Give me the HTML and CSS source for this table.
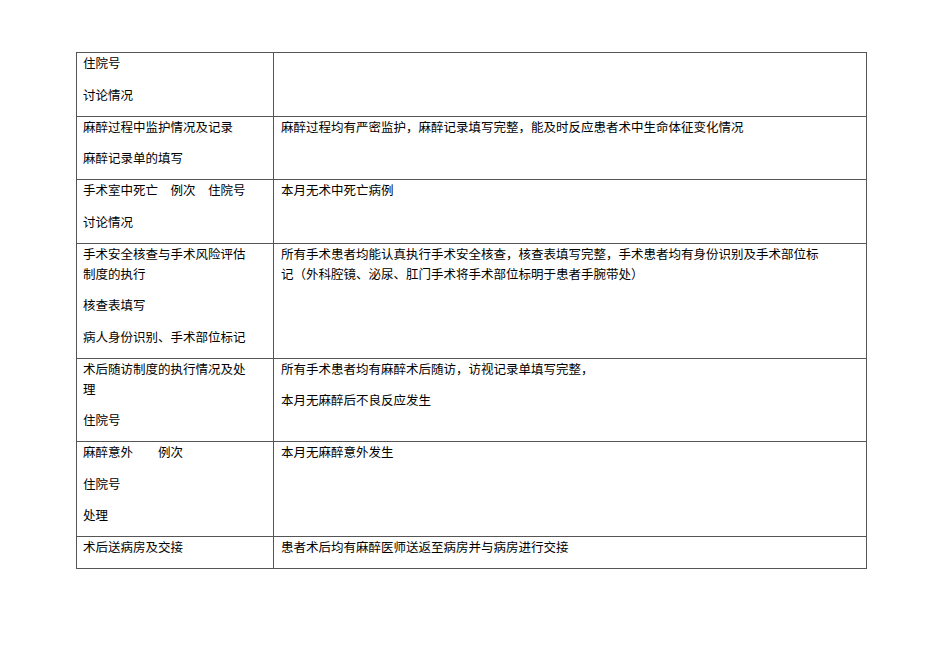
FILE: index.html
```html
<!DOCTYPE html>
<html lang="zh">
<head>
<meta charset="utf-8">
<link rel="stylesheet" href="styles.css">
</head>
<body>
<table class="report">
  <colgroup><col class="c1"><col class="c2"></colgroup>
  <tr>
    <td><p>住院号</p><p>讨论情况</p></td>
    <td></td>
  </tr>
  <tr>
    <td><p>麻醉过程中监护情况及记录</p><p>麻醉记录单的填写</p></td>
    <td><p>麻醉过程均有严密监护，麻醉记录填写完整，能及时反应患者术中生命体征变化情况</p></td>
  </tr>
  <tr>
    <td><p>手术室中死亡&emsp;例次&emsp;住院号</p><p>讨论情况</p></td>
    <td><p>本月无术中死亡病例</p></td>
  </tr>
  <tr>
    <td><p>手术安全核查与手术风险评估制度的执行</p><p>核查表填写</p><p>病人身份识别、手术部位标记</p></td>
    <td><p>所有手术患者均能认真执行手术安全核查，核查表填写完整，手术患者均有身份识别及手术部位标记（外科腔镜、泌尿、肛门手术将手术部位标明于患者手腕带处）</p></td>
  </tr>
  <tr>
    <td><p>术后随访制度的执行情况及处理</p><p>住院号</p></td>
    <td><p>所有手术患者均有麻醉术后随访，访视记录单填写完整，</p><p>本月无麻醉后不良反应发生</p></td>
  </tr>
  <tr>
    <td><p>麻醉意外&emsp;&emsp;例次</p><p>住院号</p><p>处理</p></td>
    <td><p>本月无麻醉意外发生</p></td>
  </tr>
  <tr>
    <td><p>术后送病房及交接</p></td>
    <td><p>患者术后均有麻醉医师送返至病房并与病房进行交接</p></td>
  </tr>
</table>
</body>
</html>
```
FILE: styles.css
```css
html, body {
  margin: 0;
  padding: 0;
  background: #fff;
}
body {
  padding: 52px 0 0 76px;
  font-family: "Noto Sans CJK SC", "Liberation Serif", serif;
  font-size: 12.5px;
  color: #000;
}
.report {
  border-collapse: collapse;
  width: 790px;
  table-layout: fixed;
}
.c1 { width: 197px; }
.c2 { width: 593px; }
.report td {
  border: 1px solid #555;
  vertical-align: top;
  padding: 0 18px 11px 6px;
}
.report td + td {
  padding-left: 7px;
  padding-right: 42px;
}
.report p {
  margin: 0 0 11.5px 0;
  line-height: 20px;
}
.report p:last-child {
  margin-bottom: 0;
}
.report tr:first-child td {
  height: 51.5px;
}
```
